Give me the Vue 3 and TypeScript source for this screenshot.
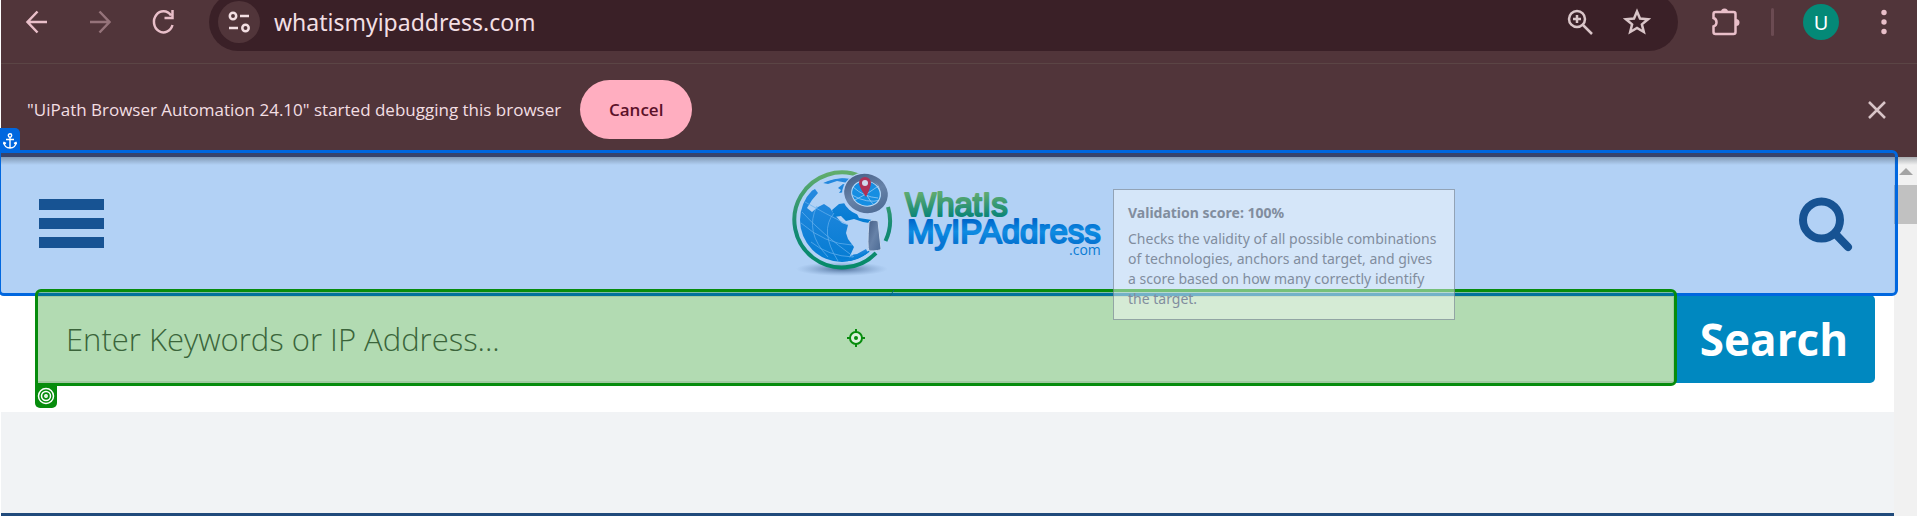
<script setup lang="ts">
import { ref } from 'vue'

const keywords = ref('')
const menuBars = [0, 1, 2]
</script>

<template>
  <div class="window">
    <div class="toolbar">
      <div class="nav">
        <button class="icon-btn" aria-label="Back">
          <svg width="24" height="28" viewBox="0 0 24 28"><path d="M22 14H3M12.500 3.500L2.500 14L12.500 24.500" /></svg>
        </button>
        <button class="icon-btn faded" aria-label="Forward">
          <svg width="24" height="28" viewBox="0 0 24 28"><path d="M2 14h19M11.500 3.500L21.500 14L11.500 24.500" /></svg>
        </button>
        <button class="icon-btn" aria-label="Reload">
          <svg width="24" height="28" viewBox="0 0 24 28"><path d="M21.500 17A9.500 10.500 0 1 1 20 7.500M21.500 2v8h-8" /></svg>
        </button>
      </div>
      <div class="omnibox">
        <button class="site-info" aria-label="View site information">
          <svg width="24" height="24" viewBox="0 0 24 24"><circle cx="6" cy="6" r="3.200" /><path d="M13 6h9M2 18h9" /><circle cx="18.500" cy="18" r="3.200" /></svg>
        </button>
        <span class="url">whatismyipaddress.com</span>
        <button class="icon-btn pale" aria-label="Zoom">
          <svg width="28" height="28" viewBox="0 0 28 28"><circle cx="11" cy="11" r="8" /><path d="M17 17l9 9M11 7v8M7 11h8" /></svg>
        </button>
        <button class="icon-btn pale" aria-label="Bookmark this tab">
          <svg width="28" height="28" viewBox="0 0 28 28"><path d="M14 3.500L17 10.600L25 11.300L18.900 16.400L20.800 24L14 20L7.200 24L9.100 16.400L3 11.300L11 10.600Z" /></svg>
        </button>
      </div>
      <div class="actions">
        <button class="icon-btn" aria-label="Extensions">
          <svg width="30" height="30" viewBox="0 0 30 30"><path d="M4.500 5h18q2 0 2 2v18q0 2-2 2H4.500q-2 0-2-2v-5.500a4.500 4.500 0 0 0 0-8.500V7q0-2 2-2z" /><path class="solid" d="M10 5a3.500 3.500 0 0 1 7 0zM25 12a3.500 3.500 0 0 1 0 7z" /></svg>
        </button>
        <span class="divider"></span>
        <button class="avatar" aria-label="Profile">U</button>
        <button class="icon-btn" aria-label="More">
          <svg width="8" height="28" viewBox="0 0 8 28"><g class="solid"><circle cx="4" cy="4.500" r="2.700" /><circle cx="4" cy="14" r="2.700" /><circle cx="4" cy="23.500" r="2.700" /></g></svg>
        </button>
      </div>
    </div>

    <div class="infobar">
      <span>"UiPath Browser Automation 24.10" started debugging this browser</span>
      <button class="cancel">Cancel</button>
      <button class="icon-btn pale close" aria-label="Close">
        <svg width="18" height="18" viewBox="0 0 18 18"><path d="M1 1l16 16M17 1L1 17" /></svg>
      </button>
    </div>

    <div class="viewport">
      <div class="page">
        <header class="site-header">
          <button class="menu" aria-label="Menu">
            <span v-for="bar in menuBars" :key="bar" class="bar"></span>
          </button>
          <a class="logo" href="#" aria-label="WhatIsMyIPAddress.com">
            <svg width="320" height="112" viewBox="0 0 320 112">
              <defs>
                <linearGradient id="ring" x1="0" y1="0" x2="0" y2="1"><stop offset="0" stop-color="#61ad6c" /><stop offset="0.600" stop-color="#138a74" /><stop offset="1" stop-color="#078b69" /></linearGradient>
                <linearGradient id="sea" x1="0" y1="0" x2="0" y2="1"><stop offset="0" stop-color="#2789df" /><stop offset="1" stop-color="#027bd2" /></linearGradient>
                <linearGradient id="steel" x1="0" y1="0" x2="1" y2="1"><stop offset="0" stop-color="#465f86" /><stop offset="0.500" stop-color="#6782a8" /><stop offset="1" stop-color="#4b6a94" /></linearGradient>
                <linearGradient id="leaf" x1="0" y1="0" x2="0" y2="1"><stop offset="0.200" stop-color="#5eaa70" /><stop offset="0.800" stop-color="#0e8777" /></linearGradient>
                <linearGradient id="azure" x1="0" y1="0" x2="0" y2="1"><stop offset="0.200" stop-color="#0068cb" /><stop offset="0.500" stop-color="#0e8ce2" /><stop offset="0.800" stop-color="#0675d2" /></linearGradient>
                <radialGradient id="shade"><stop offset="0" stop-color="#42628d" stop-opacity="0.900" /><stop offset="1" stop-color="#6d91bf" stop-opacity="0" /></radialGradient>
                <clipPath id="disc"><circle cx="51" cy="52" r="42" /></clipPath>
                <clipPath id="glass"><ellipse cx="75" cy="25" rx="15" ry="13" /></clipPath>
              </defs>
              <ellipse cx="51" cy="101" rx="46" ry="7" fill="url(#shade)" />
              <path d="M70 8.500A47.500 47.500 0 1 0 85 85M94.500 73A47.500 47.500 0 0 0 97 39" fill="none" stroke="url(#ring)" stroke-width="4" />
              <g clip-path="url(#disc)">
                <path fill="url(#sea)" d="M11 36L18 24L24 21L27 25L21 32L16 40L21 44L27 39L33 36L39 40L43 46L51 55L57 57L55 65L57 71L63 79L59 88L56 98H41L9 80L5 55Z" />
                <path fill="url(#sea)" d="M32 15Q48 8 63 11L57 15L46 13L37 16ZM47 20l5-4l4 1l-3 4l1 3l-6 1l2-3zM41 42l7-6l7-1l3-7l3 8l-5 2l8 4l4 8l13 2l3 4l-12-2l-9-3l-8 2l-5-5l-7 1z" />
                <path fill="url(#sea)" d="M56 93Q59 86 66 86L75 81L77 85L64 93Z" />
                <path d="M27 84Q53 101 79 83" fill="none" stroke="#0880d6" stroke-width="2" />
                <g class="grid-lines"><path d="M14 34Q33 45 57 57M10 55Q34 76 61 77M20 74Q37 88 62 89M26 38Q13 64 37 89M43 45Q28 63 47 93M11 44Q30 65 63 89" /></g>
              </g>
              <ellipse cx="75" cy="26" rx="24" ry="22" fill="#b4d1f6" />
              <ellipse cx="75" cy="25.500" rx="18.500" ry="16" fill="#168ee2" stroke="url(#steel)" stroke-width="7" transform="rotate(18 75 25.500)" />
              <g clip-path="url(#glass)" class="lens-lines"><path d="M62 19Q73 29 87 30M61 27Q76 36 90 32M69 11Q74 29 85 39M84 13Q92 22 89 36M62 33L77 25L89 17" /></g>
              <ellipse cx="75" cy="25.500" rx="14.500" ry="12.500" fill="none" stroke="#c1d9f3" stroke-width="1" transform="rotate(18 75 25.500)" />
              <path d="M75 29Q68 19 68 15A6 6 0 0 1 80 15Q80 19 75 29Z" fill="#ae3157" /><circle cx="74" cy="15" r="3" fill="#d0d9ed" />
              <path d="M78 54Q81 51 87 53L90 81Q89 83 78 83Q76 79 78 54Z" fill="url(#steel)" stroke="#c3d7ef" stroke-width="1" />
              <text class="word" x="114" y="48" fill="url(#leaf)" stroke="url(#leaf)">WhatIs</text>
              <text class="word" x="116" y="75" fill="url(#azure)" stroke="url(#azure)">MyIPAddress</text>
              <text class="suffix" x="278" y="87">.com</text>
            </svg>
          </a>
          <button class="icon-search" aria-label="Open search">
            <svg width="56" height="56" viewBox="0 0 56 56"><circle cx="24.500" cy="24" r="18.500" /><path d="M38.500 38L51 51" /></svg>
          </button>
        </header>

        <form class="search-row" @submit.prevent>
          <input v-model="keywords" type="text" aria-label="Keywords or IP address" placeholder="Enter Keywords or IP Address..." />
          <button type="submit">Search</button>
          <div class="target-box">
            <svg class="crosshair" width="18" height="18" viewBox="0 0 18 18"><circle cx="9" cy="9" r="6" /><path d="M9 0v3M9 15v3M0 9h3M15 9h3" /><circle class="dot" cx="9" cy="9" r="2" /></svg>
            <span class="target-badge">
              <svg width="18" height="18" viewBox="0 0 18 18"><circle cx="9" cy="9" r="7.500" /><circle cx="9" cy="9" r="4.500" /><circle cx="9" cy="9" r="1.200" /></svg>
            </span>
          </div>
        </form>
        <section class="band"></section>
        <div class="rule"></div>
      </div>
      <div class="scrollbar"><span class="arrow"></span><span class="thumb"></span></div>

      <div class="anchor-box">
        <span class="anchor-badge">
          <svg width="14" height="16" viewBox="0 0 14 16"><circle cx="7" cy="2.500" r="1.700" /><path d="M7 4v11M3 6.500h8M1 9.500Q1.500 15 7 15Q12.500 15 13 9.500M0 11l1-1.500l2 1M14 11l-1-1.500l-2 1" /></svg>
        </span>
      </div>
      <svg class="link-mark" width="6" height="8" viewBox="0 0 6 8"><path d="M1 7L5 1" /></svg>
      <div class="tooltip" role="tooltip">
        <strong>Validation score: 100%</strong>
        <p>Checks the validity of all possible combinations of technologies, anchors and target, and gives a score based on how many correctly identify the target.</p>
      </div>
      <div class="top-shadow"></div>
    </div>
  </div>
</template>

<style>
body {
  background: #fff;
}
</style>

<style scoped>
* {
  box-sizing: border-box;
}
.window {
  min-height: 100vh;
  overflow: hidden;
  display: flex;
  flex-direction: column;
  font-family: "Noto Sans", "Open Sans", sans-serif;
}
button {
  border: 0;
  padding: 0;
  background: none;
  font-family: inherit;
  cursor: pointer;
}
svg {
  display: block;
}
.toolbar {
  height: 64px;
  margin-left: 1px;
  background: #51353a;
  border-bottom: 1px solid #5b4545;
  display: flex;
  align-items: flex-start;
  padding-right: 29px;
}
.nav {
  display: flex;
  gap: 39px;
  padding: 8px 0 0 24px;
  width: 208px;
}
.icon-btn svg {
  fill: none;
  stroke: #e9bfc9;
  stroke-width: 2.500;
}
.icon-btn .solid {
  fill: #e9bfc9;
  stroke: none;
}
.faded {
  opacity: 0.450;
}
.icon-btn.pale svg {
  stroke: #d9c5c8;
}
.omnibox {
  flex: 1;
  height: 58px;
  margin-top: -7px;
  border-radius: 29px;
  background: #3a2027;
  display: flex;
  align-items: center;
  gap: 29px;
  padding: 0 27px 0 9px;
}
.site-info {
  width: 42px;
  height: 42px;
  border-radius: 50%;
  background: #51353a;
  display: grid;
  place-items: center;
}
.site-info svg {
  fill: none;
  stroke: #f3dfe3;
  stroke-width: 2.500;
}
.url {
  flex: 1;
  margin-left: -15px;
  font-size: 23px;
  line-height: 32px;
  color: #f3dfe3;
}
.actions {
  display: flex;
  align-items: center;
  height: 44px;
  margin-left: 33px;
}
.divider {
  width: 3px;
  height: 28px;
  margin: 0 29px 0 30px;
  border-radius: 2px;
  background: #6b4b52;
}
.avatar {
  width: 36px;
  height: 36px;
  margin-right: 41px;
  border-radius: 50%;
  background: #048977;
  color: #fff;
  font-size: 20px;
}
.infobar {
  height: 93px;
  margin-left: 1px;
  background: #51353a;
  display: flex;
  align-items: center;
  gap: 19px;
  padding: 0 31px 2px 26px;
  font-family: "Open Sans", sans-serif;
  font-size: 17px;
  color: #f3dfe3;
}
.cancel {
  width: 112px;
  height: 59px;
  border-radius: 30px;
  background: #ffaec0;
  color: #5b1129;
  font-size: 17px;
  font-weight: 600;
}
.close {
  margin-left: auto;
}
.viewport {
  position: relative;
  flex: 1;
  display: flex;
}
.page {
  flex: 1;
  margin-left: 1px;
  display: flex;
  flex-direction: column;
}
.site-header {
  height: 138px;
  display: flex;
  align-items: center;
  justify-content: space-between;
  padding: 0 41px 5px 38px;
  position: relative;
}
.menu {
  display: flex;
  flex-direction: column;
  gap: 8px;
  width: 65px;
  z-index: 2;
}
.bar {
  height: 11px;
  background: #175393;
}
.logo {
  position: relative;
  z-index: 2;
}
.word {
  font-family: "Liberation Sans", sans-serif;
  font-size: 33px;
  font-weight: 400;
  stroke-width: 2;
  stroke-linejoin: round;
}
.suffix {
  font-family: "Open Sans", sans-serif;
  font-size: 14px;
  fill: #087bd3;
}
.grid-lines,
.lens-lines {
  fill: none;
  stroke: #69b1ee;
  stroke-width: 0.700;
}
.lens-lines {
  stroke: #a7d1f7;
}
.icon-search {
  z-index: 2;
}
.icon-search svg {
  fill: none;
  stroke: #175393;
  stroke-width: 8;
  stroke-linecap: round;
}
.search-row {
  position: relative;
  height: 88px;
  margin: 0 19px 29px 35px;
  display: flex;
}
.search-row input {
  flex: 1;
  min-width: 0;
  border: 2px solid #e6e6e6;
  padding: 0 28px;
  font-family: "Open Sans", sans-serif;
  font-size: 31px;
  font-weight: 300;
  color: #333;
  outline: 0;
}
.search-row input::placeholder {
  color: #555;
  opacity: 1;
}
.search-row button {
  width: 200px;
  padding-right: 2px;
  border-radius: 0 5px 5px 0;
  background: #0088c0;
  color: #fff;
  font-family: "Open Sans", sans-serif;
  font-size: 44px;
  font-weight: 700;
}
.target-box {
  position: absolute;
  inset: -6px 198px -3px -1px;
  border: 3px solid #078c0d;
  border-radius: 6px 6px 6px 0;
  background: rgba(0, 135, 0, 0.300);
  background-clip: padding-box;
  z-index: 4;
  pointer-events: none;
}
.crosshair {
  position: absolute;
  left: 50%;
  top: 50%;
  transform: translate(-50%, -50%);
  fill: none;
  stroke: #078c0d;
  stroke-width: 2;
}
.crosshair circle {
  fill: #dcf0dd;
}
.crosshair .dot {
  fill: #078c0d;
  stroke: none;
}
.target-badge {
  position: absolute;
  left: -3px;
  top: 100%;
  width: 22px;
  height: 25px;
  border-radius: 0 0 5px 5px;
  background: #078c0d;
  display: grid;
  place-items: center;
}
.target-badge svg {
  fill: none;
  stroke: #fff;
  stroke-width: 1.500;
}
.band {
  flex: 1;
  min-height: 60px;
  background: #f1f3f5;
}
.rule {
  height: 3px;
  background: #204a7b;
}
.scrollbar {
  width: 23px;
  background: #f1f1f1;
  display: flex;
  flex-direction: column;
  align-items: center;
}
.arrow {
  margin: 11px 0 10px;
  border: 7px solid transparent;
  border-top: 0;
  border-bottom-color: #a3a3a3;
}
.thumb {
  width: 100%;
  height: 39px;
  background: #c1c1c1;
}
.anchor-box {
  position: absolute;
  top: -7px;
  left: -2px;
  right: 19px;
  height: 146px;
  border: 3px solid #0067df;
  border-radius: 0 6px 6px 6px;
  background: rgba(0, 103, 223, 0.300);
  background-clip: padding-box;
  z-index: 1;
}
.anchor-badge {
  position: absolute;
  left: -1px;
  bottom: 100%;
  width: 20px;
  height: 25px;
  border-radius: 0 5px 0 0;
  background: #0067df;
  display: grid;
  place-items: center;
}
.anchor-badge svg {
  fill: none;
  stroke: #fff;
  stroke-width: 1.400;
}
.link-mark {
  position: absolute;
  left: 889px;
  top: 132px;
  stroke: #066a7a;
  z-index: 5;
}
.tooltip {
  position: absolute;
  left: 1113px;
  top: 32px;
  width: 342px;
  padding: 13px 14px 10px;
  border: 1px solid rgba(80, 95, 115, 0.500);
  background: rgba(255, 255, 255, 0.450);
  color: #818d9e;
  font-size: 14px;
  line-height: 20px;
  z-index: 6;
}
.tooltip strong {
  display: block;
}
.tooltip p {
  margin: 6px 0 0;
}
.top-shadow {
  position: absolute;
  inset: 0 0 auto 1px;
  height: 8px;
  background: linear-gradient(rgba(40, 50, 60, 0.350), transparent);
  z-index: 2;
}
</style>
